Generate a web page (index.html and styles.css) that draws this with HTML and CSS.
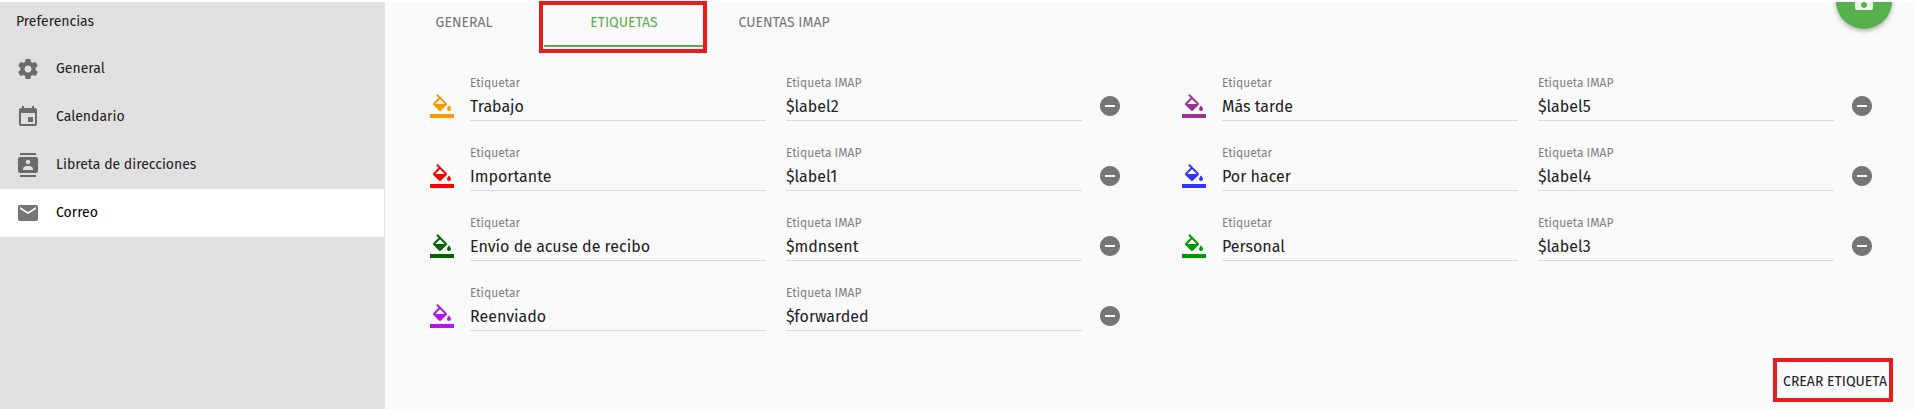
FILE: index.html
```html
<!DOCTYPE html>
<html lang="es">
<head>
<meta charset="utf-8">
<title>Preferencias</title>
<link rel="stylesheet" href="styles.css">
</head>
<body>
<svg class="sprite" aria-hidden="true">
  <symbol id="fill" viewBox="0 0 24 24"><path d="M16.56 8.94L7.62 0 6.21 1.41l2.38 2.38-5.15 5.15c-.59.59-.59 1.54 0 2.12l5.5 5.5c.29.29.68.44 1.06.44s.77-.15 1.06-.44l5.5-5.5c.59-.58.59-1.53 0-2.12zM5.21 10L10 5.21 14.79 10H5.21zM19 11.5s-2 2.17-2 3.5c0 1.1.9 2 2 2s2-.9 2-2c0-1.33-2-3.5-2-3.5zM0 20h24v4H0z"/></symbol>
  <symbol id="remove" viewBox="0 0 24 24"><path d="M12 2C6.48 2 2 6.48 2 12s4.48 10 10 10 10-4.48 10-10S17.52 2 12 2zm5 11H7v-2h10v2z"/></symbol>
</svg>
<div class="app">
  <aside class="sidebar">
    <h1 class="sidebar-title">Preferencias</h1>
    <nav class="nav">
      <a class="nav-item" href="#general"><svg class="icon" viewBox="0 0 24 24"><path d="M19.43 12.98c.04-.32.07-.64.07-.98s-.03-.66-.07-.98l2.11-1.65c.19-.15.24-.42.12-.64l-2-3.46c-.12-.22-.39-.3-.61-.22l-2.49 1c-.52-.4-1.08-.73-1.69-.98l-.38-2.65C14.46 2.18 14.25 2 14 2h-4c-.25 0-.46.18-.49.42l-.38 2.65c-.61.25-1.17.59-1.69.98l-2.49-1c-.23-.09-.49 0-.61.22l-2 3.46c-.13.22-.07.49.12.64l2.11 1.65c-.04.32-.07.65-.07.98s.03.66.07.98l-2.11 1.65c-.19.15-.24.42-.12.64l2 3.46c.12.22.39.3.61.22l2.49-1c.52.4 1.08.73 1.69.98l.38 2.65c.03.24.24.42.49.42h4c.25 0 .46-.18.49-.42l.38-2.65c.61-.25 1.17-.59 1.69-.98l2.49 1c.23.09.49 0 .61-.22l2-3.46c.12-.22.07-.49-.12-.64l-2.11-1.65zM12 15.5c-1.93 0-3.5-1.57-3.5-3.5s1.57-3.5 3.5-3.5 3.5 1.57 3.5 3.5-1.57 3.5-3.5 3.5z"/></svg>General</a>
      <a class="nav-item" href="#calendario"><svg class="icon" viewBox="0 0 24 24"><path d="M17 12h-5v5h5v-5zM16 1v2H8V1H6v2H5c-1.11 0-1.99.9-1.99 2L3 19c0 1.1.89 2 2 2h14c1.1 0 2-.9 2-2V5c0-1.1-.9-2-2-2h-1V1h-2zm3 18H5V8h14v11z"/></svg>Calendario</a>
      <a class="nav-item" href="#libreta"><svg class="icon" viewBox="0 0 24 24"><path d="M20 0H4v2h16V0zM4 24h16v-2H4v2zM20 4H4c-1.1 0-2 .9-2 2v12c0 1.1.9 2 2 2h16c1.1 0 2-.9 2-2V6c0-1.1-.9-2-2-2zm-8 2.75c1.24 0 2.25 1.01 2.25 2.25s-1.01 2.25-2.25 2.25S9.75 10.24 9.75 9 10.76 6.75 12 6.75zM17 17H7v-1.5c0-1.67 3.33-2.5 5-2.5s5 .83 5 2.5V17z"/></svg>Libreta de direcciones</a>
      <a class="nav-item nav-item-active" href="#correo" aria-current="page"><svg class="icon" viewBox="0 0 24 24"><path d="M20 4H4c-1.1 0-1.99.9-1.99 2L2 18c0 1.1.9 2 2 2h16c1.1 0 2-.9 2-2V6c0-1.1-.9-2-2-2zm0 4l-8 5-8-5V6l8 5 8-5v2z"/></svg>Correo</a>
    </nav>
  </aside>
  <main class="main">
    <div class="tabs" role="tablist">
      <button class="tab" type="button" role="tab">GENERAL</button>
      <button class="tab tab-active" type="button" role="tab" aria-selected="true">ETIQUETAS</button>
      <button class="tab" type="button" role="tab">CUENTAS IMAP</button>
    </div>
    <div class="fab-area">
      <button class="fab" type="button" aria-label="Guardar"><svg class="icon" viewBox="0 0 24 24"><path d="M17 3H5c-1.11 0-2 .9-2 2v14c0 1.1.89 2 2 2h14c1.1 0 2-.9 2-2V7l-4-4zm-5 16c-1.66 0-3-1.34-3-3s1.34-3 3-3 3 1.34 3 3-1.34 3-3 3zm3-10H5V5h10v4z"/></svg></button>
    </div>
    <form class="labels">
      <div class="row">
        <button class="swatch orange" type="button" aria-label="Color"><svg class="icon"><use href="#fill"/></svg></button>
        <div class="field"><label for="n1">Etiquetar</label><input id="n1" value="Trabajo"></div>
        <div class="field"><label for="i1">Etiqueta IMAP</label><input id="i1" value="$label2"></div>
        <button class="remove" type="button" aria-label="Eliminar"><svg class="icon"><use href="#remove"/></svg></button>
      </div>
      <div class="row">
        <button class="swatch purple" type="button" aria-label="Color"><svg class="icon"><use href="#fill"/></svg></button>
        <div class="field"><label for="n2">Etiquetar</label><input id="n2" value="Más tarde"></div>
        <div class="field"><label for="i2">Etiqueta IMAP</label><input id="i2" value="$label5"></div>
        <button class="remove" type="button" aria-label="Eliminar"><svg class="icon"><use href="#remove"/></svg></button>
      </div>
      <div class="row">
        <button class="swatch red" type="button" aria-label="Color"><svg class="icon"><use href="#fill"/></svg></button>
        <div class="field"><label for="n3">Etiquetar</label><input id="n3" value="Importante"></div>
        <div class="field"><label for="i3">Etiqueta IMAP</label><input id="i3" value="$label1"></div>
        <button class="remove" type="button" aria-label="Eliminar"><svg class="icon"><use href="#remove"/></svg></button>
      </div>
      <div class="row">
        <button class="swatch blue" type="button" aria-label="Color"><svg class="icon"><use href="#fill"/></svg></button>
        <div class="field"><label for="n4">Etiquetar</label><input id="n4" value="Por hacer"></div>
        <div class="field"><label for="i4">Etiqueta IMAP</label><input id="i4" value="$label4"></div>
        <button class="remove" type="button" aria-label="Eliminar"><svg class="icon"><use href="#remove"/></svg></button>
      </div>
      <div class="row">
        <button class="swatch darkgreen" type="button" aria-label="Color"><svg class="icon"><use href="#fill"/></svg></button>
        <div class="field"><label for="n5">Etiquetar</label><input id="n5" value="Envío de acuse de recibo"></div>
        <div class="field"><label for="i5">Etiqueta IMAP</label><input id="i5" value="$mdnsent"></div>
        <button class="remove" type="button" aria-label="Eliminar"><svg class="icon"><use href="#remove"/></svg></button>
      </div>
      <div class="row">
        <button class="swatch green" type="button" aria-label="Color"><svg class="icon"><use href="#fill"/></svg></button>
        <div class="field"><label for="n6">Etiquetar</label><input id="n6" value="Personal"></div>
        <div class="field"><label for="i6">Etiqueta IMAP</label><input id="i6" value="$label3"></div>
        <button class="remove" type="button" aria-label="Eliminar"><svg class="icon"><use href="#remove"/></svg></button>
      </div>
      <div class="row">
        <button class="swatch violet" type="button" aria-label="Color"><svg class="icon"><use href="#fill"/></svg></button>
        <div class="field"><label for="n7">Etiquetar</label><input id="n7" value="Reenviado"></div>
        <div class="field"><label for="i7">Etiqueta IMAP</label><input id="i7" value="$forwarded"></div>
        <button class="remove" type="button" aria-label="Eliminar"><svg class="icon"><use href="#remove"/></svg></button>
      </div>
    </form>
    <div class="actions">
      <button class="create" type="button">CREAR ETIQUETA</button>
    </div>
  </main>
</div>
</body>
</html>
```

FILE: styles.css
```css
* {
  box-sizing: border-box;
}

body {
  margin: 0;
  background: #fff;
  color: #212121;
  font: 14px/20px "Fira Sans", Roboto, sans-serif;
}

button {
  margin: 0;
  padding: 0;
  border: 0;
  background: none;
  color: inherit;
  font: inherit;
}

.sprite {
  display: none;
}

.icon {
  display: block;
  flex: none;
  width: 24px;
  height: 24px;
  fill: currentColor;
}

.app {
  display: flex;
  min-height: 100vh;
  border-top: 2px solid #fff;
}

.sidebar {
  position: relative;
  z-index: 1;
  flex: none;
  width: 384px;
  background: #e0e0e0;
  box-shadow: 1px 0 #e0e0e0;
}

.sidebar-title {
  margin: 0;
  padding: 10px 16px 13px;
  font-size: 14px;
  font-weight: 400;
}

.nav-item {
  display: flex;
  align-items: center;
  gap: 16px;
  height: 48px;
  padding: 0 16px;
  color: #212121;
  text-decoration: none;
}

.nav-item .icon {
  color: #6b6b6b;
}

.nav-item-active {
  background: #fff;
  color: #000;
}

.nav-item-active .icon {
  color: #757575;
}

.main {
  position: relative;
  flex: 1;
  min-width: 0;
  background: #fafafa;
}

.tabs {
  display: flex;
}

.tab {
  position: relative;
  width: 160px;
  height: 45px;
  padding-bottom: 4px;
  color: #757575;
}

.tab-active {
  border-bottom: 2px solid #56b04c;
  padding-bottom: 2px;
  color: #56b04c;
}

.tab-active::after {
  content: "";
  position: absolute;
  inset: -1px -3px -8px -5px;
  border: 4px solid #e81c1c;
}

.fab-area {
  position: absolute;
  top: 0;
  right: 13px;
  height: 40px;
  padding: 0 10px;
  overflow: hidden;
}

.fab {
  display: grid;
  place-items: center;
  width: 56px;
  height: 56px;
  margin-top: -29px;
  border-radius: 50%;
  background: #56b04c;
  box-shadow: 0 2px 5px rgba(0, 0, 0, 0.3);
  color: rgba(255, 255, 255, 0.87);
}

.labels {
  display: grid;
  grid-template-columns: 1fr 1fr;
  gap: 20px 52px;
  padding: 24px 33px 27px 46px;
}

.row {
  display: grid;
  grid-template-columns: 24px minmax(0, 322fr) minmax(0, 314fr) 40px;
  align-items: end;
}

.field {
  display: flex;
  flex-direction: column;
  min-width: 0;
}

.swatch + .field {
  margin: 0 10px 0 16px;
}

.field + .field {
  margin: 0 8px 0 10px;
}

.field label {
  padding-top: 2px;
  color: #808080;
  font-size: 12px;
}

.field input {
  width: 100%;
  height: 28px;
  padding: 0;
  border: 0;
  border-bottom: 1px solid #dadada;
  border-radius: 0;
  outline: 0;
  background: none;
  color: #212121;
  font: 16px/24px "Fira Sans", Roboto, sans-serif;
}

.swatch,
.remove {
  display: grid;
  place-items: center;
  margin-bottom: 3px;
}

.remove {
  color: #757575;
}

.orange { color: #ff9900; }
.purple { color: #993399; }
.red { color: #ff0000; }
.blue { color: #3333ff; }
.darkgreen { color: #006600; }
.green { color: #009900; }
.violet { color: #b317e8; }

.actions {
  display: flex;
  justify-content: flex-end;
  padding: 0 22px 7px;
}

.create {
  min-width: 120px;
  height: 44px;
  padding: 4px 0 0 4px;
  border: 4px solid #e81c1c;
}
```
